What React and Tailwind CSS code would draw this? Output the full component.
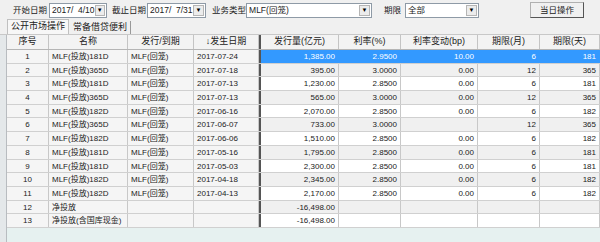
import React from "react";

const rows = [
  ["1", "MLF(投放)181D", "MLF(回笼)", "2017-07-24", "1,385.00", "2.9500", "10.00", "6", "181"],
  ["2", "MLF(投放)365D", "MLF(回笼)", "2017-07-18", "395.00", "3.0000", "0.00", "12", "365"],
  ["3", "MLF(投放)181D", "MLF(回笼)", "2017-07-13", "1,230.00", "2.8500", "0.00", "6", "181"],
  ["4", "MLF(投放)365D", "MLF(回笼)", "2017-07-13", "565.00", "3.0000", "0.00", "12", "365"],
  ["5", "MLF(投放)182D", "MLF(回笼)", "2017-06-16", "2,070.00", "2.8500", "0.00", "6", "182"],
  ["6", "MLF(投放)365D", "MLF(回笼)", "2017-06-07", "733.00", "3.0000", "", "12", "365"],
  ["7", "MLF(投放)182D", "MLF(回笼)", "2017-06-06", "1,510.00", "2.8500", "0.00", "6", "182"],
  ["8", "MLF(投放)181D", "MLF(回笼)", "2017-05-16", "1,795.00", "2.8500", "0.00", "6", "181"],
  ["9", "MLF(投放)181D", "MLF(回笼)", "2017-05-03", "2,300.00", "2.8500", "0.00", "6", "181"],
  ["10", "MLF(投放)182D", "MLF(回笼)", "2017-04-18", "2,345.00", "2.8500", "0.00", "6", "182"],
  ["11", "MLF(投放)182D", "MLF(回笼)", "2017-04-13", "2,170.00", "2.8500", "0.00", "6", "182"],
  ["12", "净投放", "", "", "-16,498.00", "", "", "", ""],
  ["13", "净投放(含国库现金)", "", "", "-16,498.00", "", "", "", ""],
];

const leftCols = [
  { title: "序号", w: "w-[42px]", align: "text-center" },
  { title: "名称", w: "w-[79px]", align: "text-left" },
  { title: "发行/到期", w: "w-[66px]", align: "text-left" },
  { title: "↓发生日期", w: "w-[65px]", align: "text-left" },
];

const rightCols = [
  { title: "发行量(亿元)", w: "w-[78px]" },
  { title: "利率(%)", w: "w-[62px]" },
  { title: "利率变动(bp)", w: "w-[77px]" },
  { title: "期限(月)", w: "w-[62px]" },
  { title: "期限(天)", w: "w-[60px]" },
];

const font = "font-['Liberation_Sans','Noto_Sans_CJK_SC',sans-serif]";

const Combo = ({ w, value }) => (
  <div className={`${w} shrink-0 h-[15px] flex items-center bg-white border border-[#8e9aa6] pl-[2px]`}>
    <span className="flex-1 text-[8.5px] leading-none text-[#222] whitespace-pre">{value}</span>
    <span className="w-[11px] h-[11px] mr-[1px] flex items-center justify-center bg-[#ececec] border border-[#b5b5b5] text-[6px] text-black">▼</span>
  </div>
);

const Label = ({ children, cls }) => (
  <span className={`shrink-0 whitespace-nowrap text-[8.5px] ${cls}`}>{children}</span>
);

export default function App() {
  return (
    <div className={`w-[600px] h-[242px] bg-[#f0f0f0] overflow-hidden ${font} text-[8px] text-[#222]`}>
      {/* toolbar */}
      <div className="h-[20px] flex items-center pl-[13px]">
        <Label cls="mr-[2px]">开始日期</Label>
        <Combo w="w-[58px]" value="2017/  4/10" />
        <Label cls="ml-[5px] mr-[1px]">截止日期</Label>
        <Combo w="w-[59px]" value="2017/  7/31" />
        <Label cls="ml-[6px]">业务类型</Label>
        <Combo w="w-[126px]" value="MLF(回笼)" />
        <Label cls="ml-[12px] mr-[4px]">期限</Label>
        <Combo w="w-[74px]" value="全部" />
        <button className="shrink-0 ml-[51px] w-[54px] h-[16px] bg-[#f0f0f0] border border-[#b0b0b0] border-r-[#555] border-b-[#555] text-[8.5px] leading-none whitespace-nowrap">
          当日操作
        </button>
      </div>
      {/* tabs */}
      <div className="h-[15px] flex items-end pl-[7px] text-[9px] border-b border-[#c8c8c8]">
        <div className="h-[15px] px-[3px] flex items-center bg-[#f7f7f7] border border-b-0 border-[#c0c0c0] whitespace-nowrap">公开市场操作</div>
        <div className="h-[13px] px-[3px] ml-[1px] flex items-center border-r border-[#999] whitespace-nowrap">常备借贷便利</div>
      </div>
      {/* grid */}
      <div className="flex h-[207px]">
        <div className="w-[7px] bg-[#e4e8ea] border-r border-[#b8bcc0]" />
        <div className="flex flex-col">
          <div className="flex h-[15px] bg-[#f3f3f3] border-b border-[#b5b5b5]">
            {leftCols.map((c) => (
              <div key={c.title} className={`${c.w} flex items-center justify-center border-r border-[#c4c4c4] text-[9px] whitespace-nowrap`}>
                {c.title}
              </div>
            ))}
            <div className="w-[2px] bg-[#555]" />
            {rightCols.map((c) => (
              <div key={c.title} className={`${c.w} flex items-center justify-center border-r border-[#c4c4c4] text-[9px] whitespace-nowrap`}>
                {c.title}
              </div>
            ))}
          </div>
          {rows.map((r, i) => {
            const sel = i === 0;
            const even = i % 2 === 1;
            return (
              <div key={r[0]} className="flex h-[13.7px] border-b border-[#d0d0d0]">
                {leftCols.map((c, j) => (
                  <div
                    key={j}
                    className={`${c.w} ${c.align} bg-[#f5f5f5] border-r border-[#c8c8c8] px-[3px] leading-[13px] text-[8px] whitespace-nowrap overflow-hidden`}
                  >
                    {r[j]}
                  </div>
                ))}
                <div className="w-[2px] bg-[#555]" />
                {rightCols.map((c, j) => (
                  <div
                    key={j}
                    className={`${c.w} text-right pr-[3px] leading-[13px] text-[8px] border-r ${
                      sel
                        ? "bg-[#3399ff] text-white border-[#3399ff]"
                        : even
                        ? "bg-[#f0f0f0] border-[#c8c8c8]"
                        : "bg-white border-[#c8c8c8]"
                    }`}
                  >
                    {r[j + 4]}
                  </div>
                ))}
              </div>
            );
          })}
          <div className="flex-1 bg-[#e6f1f0]" />
        </div>
      </div>
    </div>
  );
}
